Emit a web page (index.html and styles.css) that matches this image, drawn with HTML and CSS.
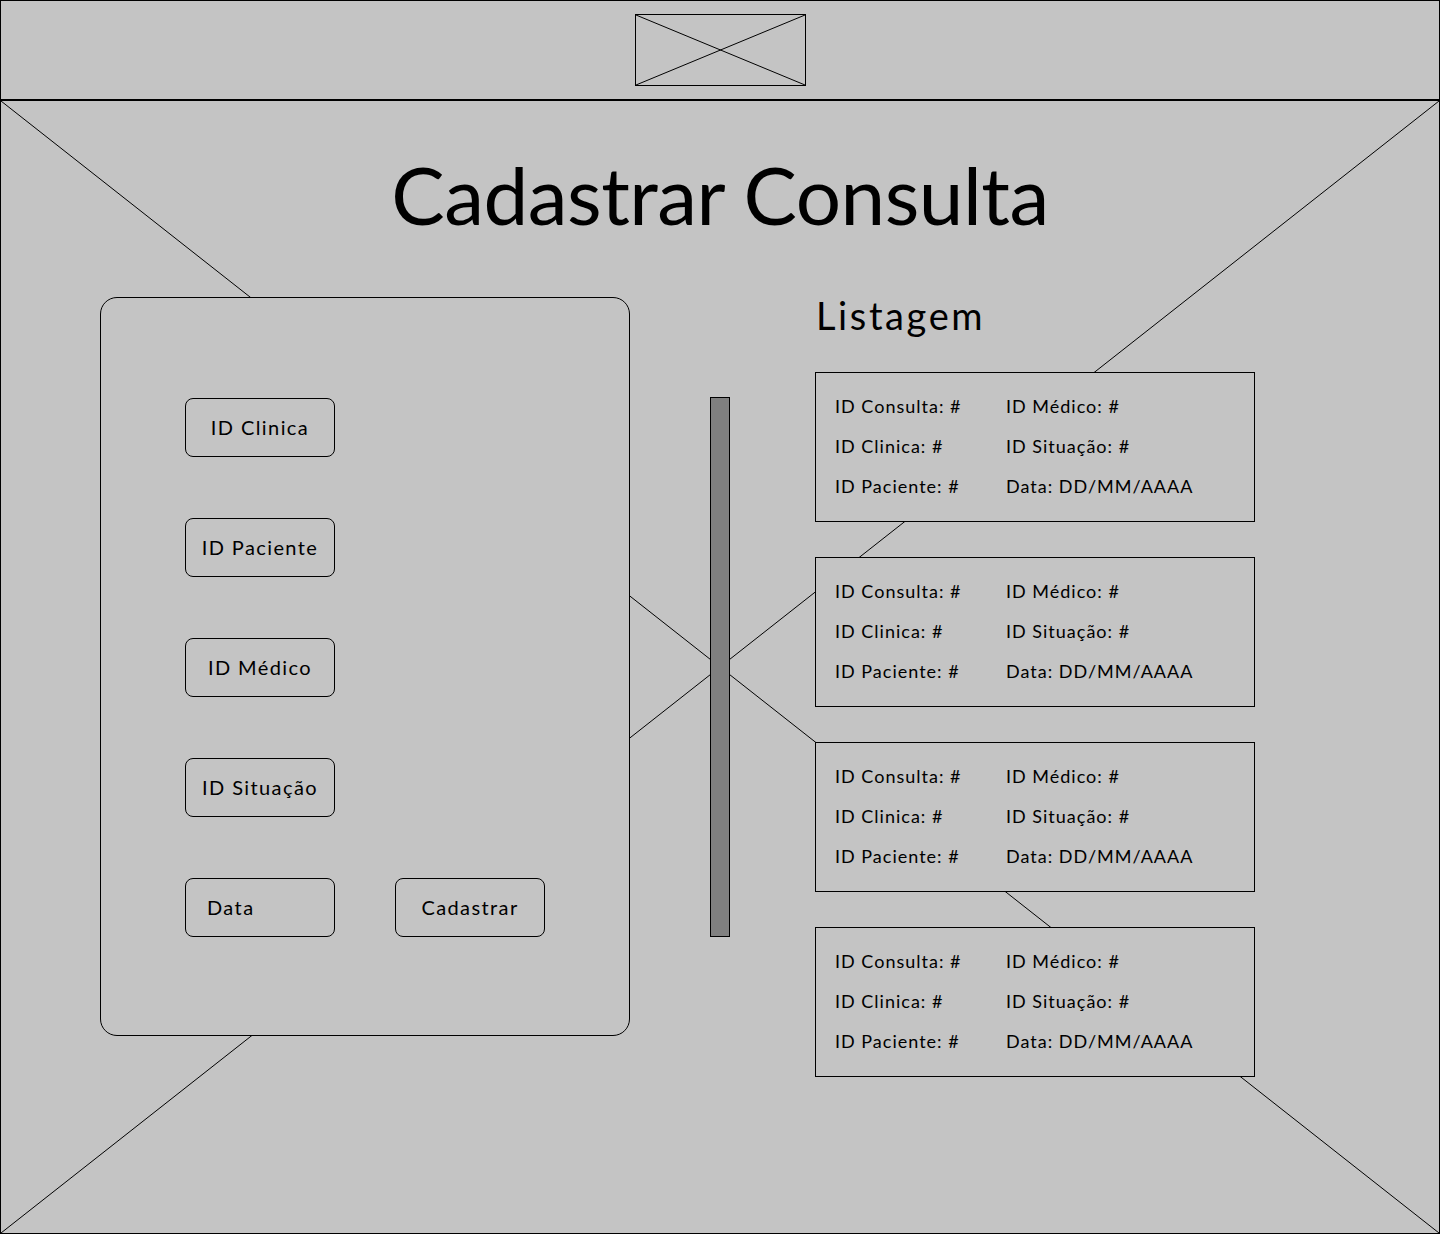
FILE: index.html
```html
<!DOCTYPE html>
<html lang="pt-BR">
<head>
  <meta charset="UTF-8" />
  <meta name="viewport" content="width=device-width, initial-scale=1.0"/>
  <title>Cadastrar Consulta</title>
  <link rel="stylesheet" href="styles.css">
</head>
<body>
  <div class="frame">
    <header class="topbar">
      <div class="logo-ph">
        <svg viewBox="0 0 100 100" preserveAspectRatio="none">
          <line x1="0" y1="0" x2="100" y2="100" vector-effect="non-scaling-stroke" />
          <line x1="100" y1="0" x2="0" y2="100" vector-effect="non-scaling-stroke" />
        </svg>
      </div>
    </header>

    <main class="content">
      <svg class="content-x" viewBox="0 0 100 100" preserveAspectRatio="none">
        <line x1="0" y1="0" x2="100" y2="100" vector-effect="non-scaling-stroke" />
        <line x1="100" y1="0" x2="0" y2="100" vector-effect="non-scaling-stroke" />
      </svg>

      <h1 class="title">Cadastrar Consulta</h1>

      <div class="workspace">
        <form class="panel">
          <div class="field">ID Clinica</div>
          <div class="field">ID Paciente</div>
          <div class="field">ID Médico</div>
          <div class="field">ID Situação</div>
          <div class="field-row">
            <div class="field field-left">Data</div>
            <button type="submit" class="field">Cadastrar</button>
          </div>
        </form>

        <div class="scrollbar"></div>

        <section class="listing">
          <h2>Listagem</h2>
          <div class="cards">
            <div class="card">
              <span>ID Consulta: #</span><span>ID Médico: #</span>
              <span>ID Clinica: #</span><span>ID Situação: #</span>
              <span>ID Paciente: #</span><span>Data: DD/MM/AAAA</span>
            </div>
            <div class="card">
              <span>ID Consulta: #</span><span>ID Médico: #</span>
              <span>ID Clinica: #</span><span>ID Situação: #</span>
              <span>ID Paciente: #</span><span>Data: DD/MM/AAAA</span>
            </div>
            <div class="card">
              <span>ID Consulta: #</span><span>ID Médico: #</span>
              <span>ID Clinica: #</span><span>ID Situação: #</span>
              <span>ID Paciente: #</span><span>Data: DD/MM/AAAA</span>
            </div>
            <div class="card">
              <span>ID Consulta: #</span><span>ID Médico: #</span>
              <span>ID Clinica: #</span><span>ID Situação: #</span>
              <span>ID Paciente: #</span><span>Data: DD/MM/AAAA</span>
            </div>
          </div>
        </section>
      </div>
    </main>
  </div>
</body>
</html>
```

FILE: styles.css
```css
* {
  box-sizing: border-box;
}

body {
  margin: 0;
  padding: 0;
  background: #c4c4c4;
}

.frame {
  width: 1440px;
  height: 1234px;
  border: 1px solid #000;
  background: #c4c4c4;
  display: flex;
  flex-direction: column;
  font-family: Lato, "Noto Sans", sans-serif;
  color: #000;
}

.topbar {
  height: 100px;
  flex-shrink: 0;
  border-bottom: 2px solid #000;
  display: flex;
  justify-content: center;
  padding-top: 13px;
}

.logo-ph {
  width: 171px;
  height: 72px;
  border: 1px solid #000;
}

.logo-ph svg,
.content-x {
  display: block;
  width: 100%;
  height: 100%;
}

svg line {
  stroke: #000;
  stroke-width: 1;
}

.content {
  flex: 1;
  position: relative;
}

.content-x {
  position: absolute;
  top: 0;
  left: 0;
}

.title {
  position: relative;
  margin: 0;
  padding-top: 53px;
  text-align: center;
  font-size: 80px;
  line-height: 80px;
  font-weight: 400;
  letter-spacing: -0.5px;
}

.workspace {
  position: relative;
  display: flex;
  align-items: flex-start;
  margin-top: 63px;
  padding-left: 99px;
}

.panel {
  width: 530px;
  height: 739px;
  border: 1px solid #000;
  border-radius: 17px;
  background: #c4c4c4;
  padding: 100px 0 0 84px;
  display: flex;
  flex-direction: column;
  gap: 61px;
}

.field {
  width: 150px;
  height: 59px;
  border: 1px solid #000;
  border-radius: 8px;
  background: #c4c4c4;
  display: flex;
  align-items: center;
  justify-content: center;
  font-family: inherit;
  font-size: 20px;
  letter-spacing: 1.4px;
  color: #000;
  padding: 0 0 2px;
}

.field-left {
  justify-content: flex-start;
  padding-left: 21px;
}

.field-row {
  display: flex;
  gap: 60px;
}

.scrollbar {
  margin-left: 80px;
  margin-top: 100px;
  width: 20px;
  height: 540px;
  border: 1px solid #000;
  background: #808080;
}

.listing {
  margin-left: 85px;
}

.listing h2 {
  margin: 0;
  height: 75px;
  padding-left: 1px;
  font-size: 38px;
  line-height: 36px;
  font-weight: 400;
  letter-spacing: 2.6px;
}

.cards {
  display: flex;
  flex-direction: column;
  gap: 35px;
}

.card {
  width: 440px;
  height: 150px;
  border: 1px solid #000;
  background: #c4c4c4;
  padding: 13px 0 0 19px;
  display: grid;
  grid-template-columns: 171px auto;
  align-content: start;
  font-size: 18px;
  line-height: 40px;
  letter-spacing: 1px;
}
```
